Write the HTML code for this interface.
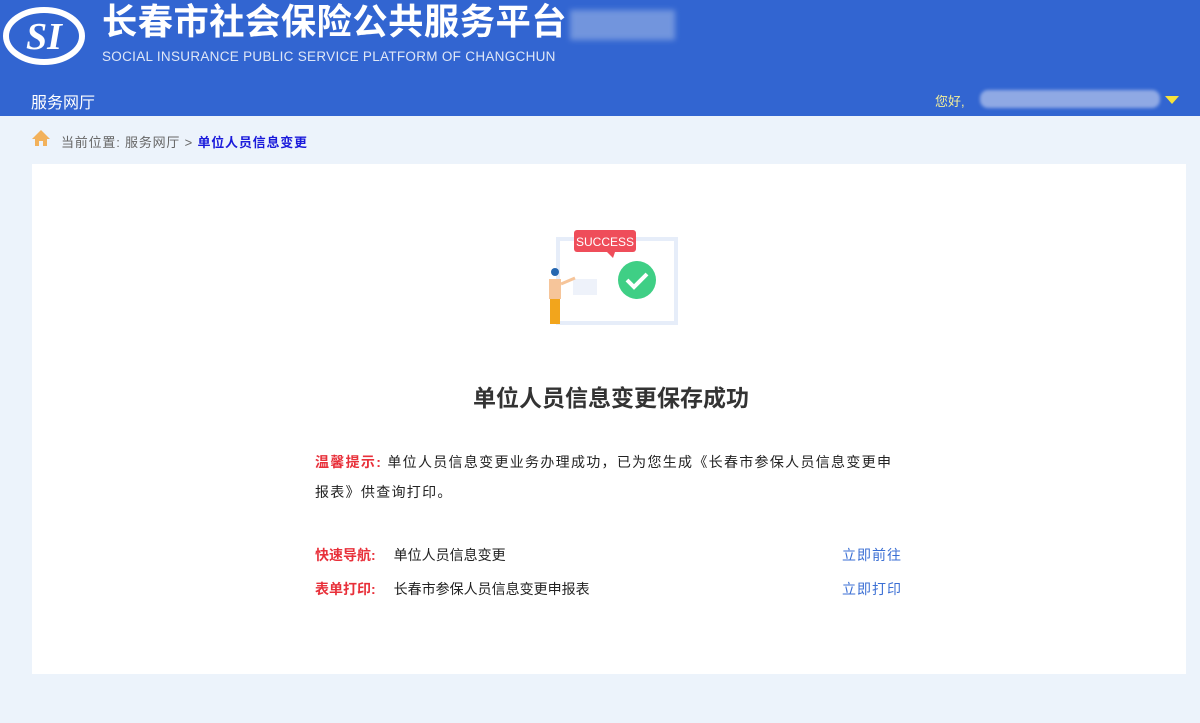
<!DOCTYPE html>
<html><head><meta charset="utf-8"><style>
*{margin:0;padding:0;box-sizing:border-box}
body{width:1200px;height:723px;background:#ecf3fb;font-family:"Liberation Sans","Noto Sans CJK SC",sans-serif;position:relative;overflow:hidden}
.hd{position:absolute;left:0;top:0;width:1200px;height:116px;background:#3265d1}
.abs{position:absolute}
.red{color:#e8303a;font-weight:bold}
</style></head><body>
<div class="hd">
  <svg class="abs" style="left:2px;top:6px" width="84" height="60" viewBox="0 0 84 60">
    <ellipse cx="42" cy="30" rx="38" ry="26" fill="none" stroke="#fff" stroke-width="6"/>
    <text x="42" y="43" text-anchor="middle" font-family="Liberation Serif" font-style="italic" font-weight="bold" font-size="38" fill="#fff">SI</text>
  </svg>
  <div class="abs" style="left:102px;top:0px;font-size:36px;font-weight:bold;color:#fff;line-height:44px;width:470px;white-space:nowrap;letter-spacing:0.5px;transform:scaleX(0.98);transform-origin:left">长春市社会保险公共服务平台</div>
  <div class="abs" style="left:570px;top:10px;width:105px;height:30px;background:#9db6e6;opacity:.6;filter:blur(3px)"></div>
  <div class="abs" style="left:102px;top:49px;font-size:13.5px;color:#dfe7f7;letter-spacing:.3px">SOCIAL INSURANCE PUBLIC SERVICE PLATFORM OF CHANGCHUN</div>
  <div class="abs" style="left:31px;top:89px;font-size:16px;color:#fff">服务网厅</div>
  <div class="abs" style="left:935px;top:91px;font-size:13px;color:#f4ef9a">您好,</div>
  <div class="abs" style="left:980px;top:90px;width:180px;height:18px;background:#8fa9e4;border-radius:8px;filter:blur(1.5px)"></div>
  <div class="abs" style="left:1165px;top:96px;width:0;height:0;border-left:7px solid transparent;border-right:7px solid transparent;border-top:8px solid #f7e23a"></div>
</div>
<svg class="abs" style="left:31px;top:129px" width="20" height="18" viewBox="0 0 20 18"><path d="M10 1 L1 10 H4 V17 H8 V12 H12 V17 H16 V10 H19 Z" fill="#f2b15b"/></svg>
<div class="abs" style="left:61px;top:132px;font-size:13px;color:#666;letter-spacing:0.8px">当前位置: 服务网厅 &gt; <b style="color:#1a1adb">单位人员信息变更</b></div>
<div class="abs" style="left:32px;top:164px;width:1154px;height:510px;background:#fff"></div>
<svg class="abs" style="left:515px;top:222px" width="190" height="115" viewBox="0 0 190 115">
  <rect x="43" y="17" width="118" height="84" fill="#fff" stroke="#e6edf9" stroke-width="4"/>
  <rect x="58" y="57" width="24" height="16" fill="#eef2fa"/>
  <rect x="59" y="8" width="62" height="22" rx="3" fill="#ef4d5a"/>
  <path d="M92 30 L98 36 L100 30Z" fill="#ef4d5a"/>
  <text x="90" y="24" text-anchor="middle" font-size="12" fill="#fff" font-family="Liberation Sans">SUCCESS</text>
  <circle cx="122" cy="58" r="19" fill="#3fcf85"/>
  <path d="M112 58 L119 65 L132 52" fill="none" stroke="#fff" stroke-width="4"/>
  <circle cx="40" cy="50" r="4" fill="#2466b0"/>
  <path d="M34 57 h12 v20 h-12z" fill="#f6c59a"/>
  <path d="M46 62 L60 56" stroke="#f6c59a" stroke-width="3"/>
  <path d="M35 77 h10 v25 h-10z" fill="#f2a51c"/>
</svg>
<div class="abs" style="left:0;width:1222px;top:379px;text-align:center;font-size:23px;font-weight:bold;color:#333">单位人员信息变更保存成功</div>
<div class="abs" style="left:315px;top:447px;width:640px;font-size:14px;line-height:30px;color:#222;letter-spacing:1.3px;white-space:nowrap"><span class="red">温馨提示:</span> 单位人员信息变更业务办理成功，已为您生成《长春市参保人员信息变更申<br>报表》供查询打印。</div>
<div class="abs" style="left:315px;top:545px;font-size:14px;color:#222"><span class="red">快速导航:</span><span style="margin-left:18px">单位人员信息变更</span></div>
<div class="abs" style="left:315px;top:579px;font-size:14px;color:#222"><span class="red">表单打印:</span><span style="margin-left:18px">长春市参保人员信息变更申报表</span></div>
<div class="abs" style="left:842px;top:545px;font-size:14px;color:#3b6fd4;letter-spacing:1px">立即前往</div>
<div class="abs" style="left:842px;top:579px;font-size:14px;color:#3b6fd4;letter-spacing:1px">立即打印</div>
</body></html>
